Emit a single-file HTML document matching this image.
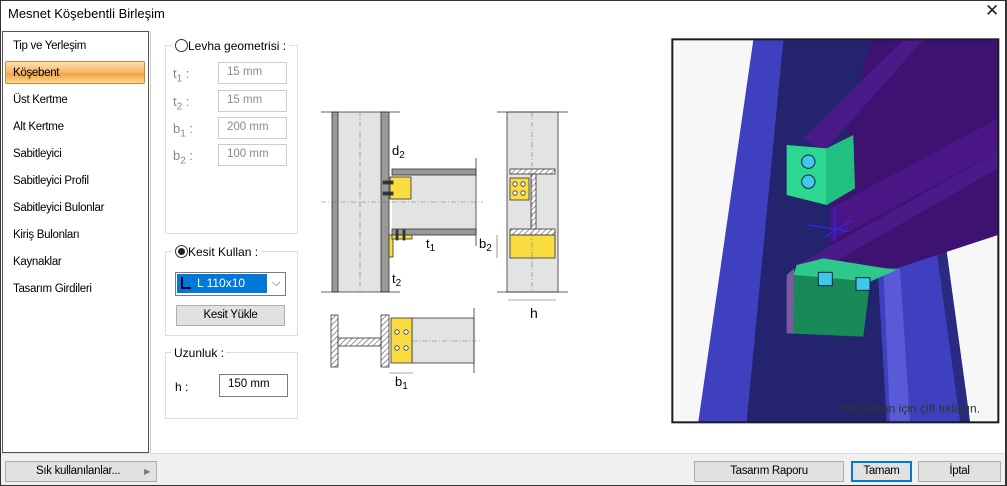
<!DOCTYPE html>
<html><head><meta charset="utf-8"><style>
*{margin:0;padding:0;box-sizing:border-box}
body{width:1007px;height:486px;position:relative;background:#fff;font-family:"Liberation Sans","DejaVu Sans",sans-serif;font-size:12px;color:#000;overflow:hidden}
.a{position:absolute}
.it{position:absolute;left:13px;font-size:11.5px;letter-spacing:-0.3px}
.inp{position:absolute;border:1px solid #ccc;background:#fff;color:#8a8a8a;font-size:11.5px;padding:3px 0 0 8px;height:22px;width:69px}
.lbl{position:absolute;color:#888;font-size:13px}
.lbl sub{font-size:10px}
.grp{position:absolute;border:1px solid #ddd}
.btn{position:absolute;border:1px solid #adadad;background:#e1e1e1;font-size:11.5px;letter-spacing:-0.3px;text-align:center;line-height:19px;height:21px}
</style></head><body>
<div class="a" style="left:0;top:0;width:1007px;height:486px;border:1px solid #333;border-right:2px solid #333"></div>
<div class="a" style="left:8px;top:6px;font-size:13px">Mesnet Köşebentli Birleşim</div>
<div class="a" style="left:985px;top:1px;font-size:17px;font-weight:100;color:#222">✕</div>
<div class="a" style="left:1px;top:453px;width:1004px;height:32px;background:#f0f0f0;border-top:1px solid #ddd"></div>
<!-- left list -->
<div class="a" style="left:2px;top:31px;width:147px;height:422px;border:1px solid #555;background:#fff"></div>
<div class="a" style="left:150px;top:31px;width:1px;height:422px;background:#ccc"></div>
<div class="a" style="left:5px;top:61px;width:140px;height:23px;border:1px solid #c88a3a;border-radius:2px;background:linear-gradient(#fde0b0,#f6b668 50%,#f3a33e 55%,#fcd49a)"></div>
<div class="it" style="top:40px">Tip ve Yerleşim</div>
<div class="it" style="top:67px">Köşebent</div>
<div class="it" style="top:94px">Üst Kertme</div>
<div class="it" style="top:121px">Alt Kertme</div>
<div class="it" style="top:148px">Sabitleyici</div>
<div class="it" style="top:175px">Sabitleyici Profil</div>
<div class="it" style="top:202px">Sabitleyici Bulonlar</div>
<div class="it" style="top:229px">Kiriş Bulonları</div>
<div class="it" style="top:256px">Kaynaklar</div>
<div class="it" style="top:283px">Tasarım Girdileri</div>
<!-- group levha -->
<div class="grp" style="left:165px;top:45px;width:133px;height:189px"></div>
<div class="a" style="left:172px;top:38px;background:#fff;padding:0 3px;font-size:12px;line-height:16px"><span style="display:inline-block;width:13px;height:13px;border:1px solid #333;border-radius:50%;vertical-align:-2px"></span>Levha geometrisi :</div>
<div class="lbl" style="left:173px;top:66px">t<sub>1</sub> :</div><div class="inp" style="left:218px;top:62px">15 mm</div>
<div class="lbl" style="left:173px;top:94px">t<sub>2</sub> :</div><div class="inp" style="left:218px;top:90px">15 mm</div>
<div class="lbl" style="left:173px;top:121px">b<sub>1</sub> :</div><div class="inp" style="left:218px;top:117px">200 mm</div>
<div class="lbl" style="left:173px;top:148px">b<sub>2</sub> :</div><div class="inp" style="left:218px;top:144px">100 mm</div>
<!-- kesit -->
<div class="grp" style="left:165px;top:251px;width:133px;height:85px"></div>
<div class="a" style="left:172px;top:244px;background:#fff;padding:0 3px;line-height:16px"><span style="display:inline-block;width:13px;height:13px;border:1px solid #333;border-radius:50%;vertical-align:-2px;position:relative"><span style="position:absolute;left:2px;top:2px;width:7px;height:7px;border-radius:50%;background:#222"></span></span>Kesit Kullan :</div>
<div class="a" style="left:175px;top:272px;width:111px;height:24px;border:1px solid #7a7a7a;background:#fff"></div>
<div class="a" style="left:177px;top:274px;width:90px;height:19px;background:#0078d7;color:#fff;font-size:12px;line-height:19px;padding-left:20px">L 110x10</div>
<div class="a" style="left:181px;top:277px;width:10px;height:12px;border-left:2px solid #003;border-bottom:2px solid #003"></div>
<div class="a" style="left:272px;top:277px;font-size:11px;color:#444">⌵</div>
<div class="btn" style="left:176px;top:305px;width:109px">Kesit Yükle</div>
<!-- uzunluk -->
<div class="grp" style="left:165px;top:352px;width:133px;height:67px"></div>
<div class="a" style="left:172px;top:345px;background:#fff;padding:0 2px;line-height:16px">Uzunluk :</div>
<div class="a" style="left:175px;top:380px">h :</div>
<div class="inp" style="left:219px;top:374px;border-color:#7a7a7a;color:#000;height:23px">150 mm</div>
<!-- diagram -->
<svg class="a" style="left:310px;top:100px" width="290" height="290" viewBox="310 100 290 290">
<defs><pattern id="h" width="4" height="4" patternUnits="userSpaceOnUse" patternTransform="rotate(45)"><rect width="4" height="4" fill="#fff"/><line x1="0" y1="0" x2="0" y2="4" stroke="#555" stroke-width="1.2"/></pattern></defs>
<g stroke="#333" stroke-width="0.8">
<rect x="338" y="112" width="43" height="180" fill="#e3e3e3" stroke="none"/>
<rect x="332" y="112" width="6" height="180" fill="#999"/>
<rect x="381" y="112" width="8" height="180" fill="#999"/>
<line x1="321" y1="112" x2="400" y2="112"/><line x1="321" y1="292" x2="400" y2="292"/>
<rect x="392" y="175" width="84" height="54" fill="#e3e3e3" stroke="none"/>
<rect x="392" y="169" width="84" height="6" fill="#999"/>
<rect x="392" y="229" width="84" height="6" fill="#999"/>
<line x1="476" y1="158" x2="476" y2="246"/>
<rect x="390" y="177" width="21" height="22" fill="#f8dc40"/>
<rect x="389" y="235" width="4" height="22" fill="#f8dc40"/>
<rect x="392" y="235" width="20" height="4" fill="#f8dc40"/>
<rect x="383" y="181" width="10" height="3" fill="#333"/><rect x="383" y="192" width="10" height="3" fill="#333"/>
<rect x="396" y="230" width="2" height="10" fill="#333"/><rect x="403" y="230" width="2" height="10" fill="#333"/>
<rect x="507" y="112" width="51" height="180" fill="#e3e3e3"/>
<line x1="497" y1="112" x2="568" y2="112"/><line x1="497" y1="292" x2="568" y2="292"/>
<rect x="510" y="169" width="45" height="5" fill="url(#h)"/>
<rect x="531" y="174" width="5" height="56" fill="url(#h)"/>
<rect x="510" y="229" width="45" height="6" fill="url(#h)"/>
<rect x="510" y="178" width="19" height="22" fill="#f8dc40"/>
<rect x="510" y="235" width="45" height="23" fill="#f8dc40"/>
<rect x="331" y="315" width="7" height="52" fill="url(#h)"/>
<rect x="381" y="315" width="8" height="52" fill="url(#h)"/>
<rect x="338" y="338" width="43" height="8" fill="url(#h)"/>
<rect x="412" y="318" width="62" height="45" fill="#e3e3e3"/>
<rect x="391" y="318" width="21" height="45" fill="#f8dc40"/>
<line x1="474" y1="308" x2="474" y2="373"/>
</g>
<g fill="#fff" stroke="#333" stroke-width="0.8">
<circle cx="515" cy="184" r="2.2"/><circle cx="523" cy="184" r="2.2"/><circle cx="515" cy="193" r="2.2"/><circle cx="523" cy="193" r="2.2"/>
<circle cx="397" cy="332" r="2.2"/><circle cx="406" cy="332" r="2.2"/><circle cx="397" cy="348" r="2.2"/><circle cx="406" cy="348" r="2.2"/>
</g>
<g stroke="#777" stroke-width="0.6" stroke-dasharray="5,2,1,2" fill="none">
<line x1="321" y1="202" x2="483" y2="202"/><line x1="360" y1="112" x2="360" y2="292"/>
<line x1="532" y1="112" x2="532" y2="292"/><line x1="412" y1="341" x2="480" y2="341"/>
</g>
<g stroke="#555" stroke-width="0.6"><line x1="497" y1="235" x2="497" y2="258"/><line x1="508" y1="300" x2="556" y2="300"/><line x1="389" y1="373" x2="413" y2="373"/></g>
<g font-size="13" fill="#000" font-family="Liberation Sans,sans-serif">
<text x="392" y="155">d<tspan font-size="10" dy="3">2</tspan></text>
<text x="426" y="248">t<tspan font-size="10" dy="3">1</tspan></text>
<text x="479" y="248">b<tspan font-size="10" dy="3">2</tspan></text>
<text x="392" y="283">t<tspan font-size="10" dy="3">2</tspan></text>
<text x="530" y="318" font-size="14">h</text>
<text x="395" y="386">b<tspan font-size="10" dy="3">1</tspan></text>
</g>
</svg>
<!-- 3D -->
<svg class="a" style="left:670px;top:35px" width="330" height="390" viewBox="0 0 990 1170">
<rect x="9" y="15" width="975" height="1145" fill="#f7f7f7"/>
<polygon points="250,15 340,15 300,1160 85,1160" fill="#3e40c0"/>
<polygon points="340,15 600,15 660,1160 230,1160" fill="#24246e"/>
<polygon points="620,650 830,650 900,1160 650,1160" fill="#3e40c0"/>
<polygon points="640,700 690,700 720,1160 660,1160" fill="#5a5ad8"/>
<polygon points="800,650 830,650 900,1160 870,1160" fill="#2a2a80"/>
<polygon points="600,15 984,15 984,600 680,700 480,700 480,520" fill="#3e1270"/>
<polygon points="480,520 984,250 984,350 480,620" fill="#4a1585"/>
<polygon points="400,310 700,15 760,15 460,350" fill="#4a1a88"/>
<polygon points="380,690 984,350 984,400 460,700" fill="#4a1a88"/>
<polygon points="350,330 470,340 470,510 350,480" fill="#2cd890"/>
<polygon points="470,340 550,300 555,460 470,510" fill="#22c080"/>
<polygon points="380,690 460,670 680,705 600,740 370,720" fill="#2ec88a"/>
<polygon points="370,720 600,740 580,905 350,895" fill="#188a58"/>
<polygon points="350,720 372,700 370,895 350,895" fill="#7a5aa0"/>
<g fill="#40c8e8" stroke="#124" stroke-width="3"><circle cx="415" cy="380" r="20"/><circle cx="415" cy="440" r="20"/><rect x="445" y="712" width="42" height="40"/><rect x="558" y="728" width="42" height="38"/></g>
<g stroke="#2030ff" stroke-width="3"><line x1="415" y1="570" x2="540" y2="590"/><line x1="465" y1="605" x2="545" y2="555"/><line x1="495" y1="520" x2="495" y2="620"/></g>
<rect x="7" y="13" width="978" height="1149" fill="none" stroke="#1a1a2a" stroke-width="6"/>
<text x="508" y="1132" font-size="36" fill="#2a3a2a" font-family="Liberation Sans,sans-serif">Tam ekran için çift tıklayın.</text>
</svg>
<!-- bottom -->
<div class="btn" style="left:5px;top:461px;width:152px;text-align:left;padding-left:30px">Sık kullanılanlar...<span style="position:absolute;right:6px;font-size:8px;color:#777">▶</span></div>
<div class="btn" style="left:694px;top:461px;width:150px">Tasarım Raporu</div>
<div class="btn" style="left:851px;top:461px;width:61px;border:2px solid #0078d7;line-height:17px">Tamam</div>
<div class="btn" style="left:918px;top:461px;width:83px">İptal</div>
</body></html>
